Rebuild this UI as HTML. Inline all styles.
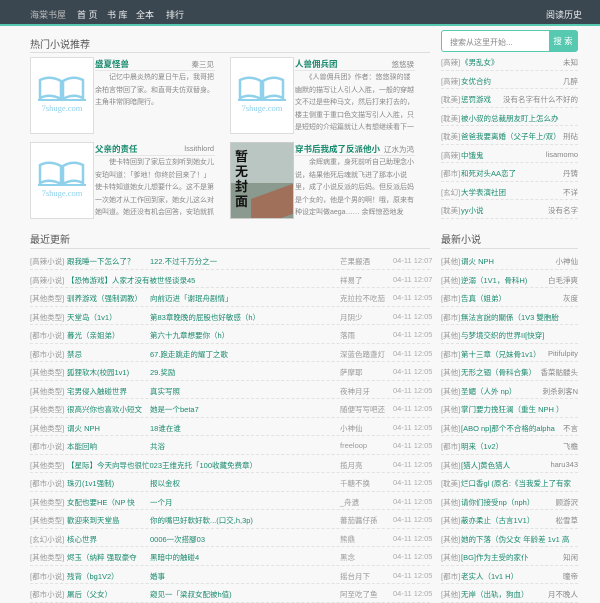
<!DOCTYPE html>
<html><head><meta charset="utf-8"><style>
*{margin:0;padding:0;box-sizing:border-box}
body{width:600px;height:600px;overflow:hidden;background:#f8f8f8;font-family:"Liberation Sans","Noto Sans CJK SC",sans-serif;color:#666;font-size:8px}
.nav{height:26px;background:#3a4750;border-bottom:2px solid #56c9b0;position:relative;color:#eee;font-size:9px}
.nav span{position:absolute;top:8px}
.abs{position:absolute}
.h{position:absolute;font-size:10px;color:#555}
.line{position:absolute;height:1px;background:#ddd}
.cover{position:absolute;width:64px;height:77px;background:#fff;border:1px solid #ddd}
.cover svg{position:absolute;left:6px;top:16px}
.cover i{position:absolute;left:0;width:62px;text-align:center;top:45px;font-style:normal;font-family:"Liberation Serif",serif;color:#8fd0ea;font-size:8.5px}
.bt{position:absolute;font-size:8.5px;font-weight:bold;color:#1a8a6e}
.au{position:absolute;font-size:7.5px;color:#888;text-align:right}
.ds{position:absolute;font-size:7px;line-height:12.5px;color:#888;overflow:hidden;height:63px}
.row{position:absolute;left:30px;width:400px;height:18.5px;border-bottom:1px dashed #e2e2e2;font-size:7.5px;white-space:nowrap}
.row span{position:absolute;top:5px}
.g{color:#999}.t{color:#1a8a6e}
.r{position:absolute;left:441px;width:137px;height:18.5px;border-bottom:1px dashed #e2e2e2;font-size:7.5px;white-space:nowrap;overflow:hidden}
.r span{position:absolute;top:5px}
.r .a{right:0;color:#888;background:#f8f8f8;padding-left:3px}
</style></head><body>
<div class="nav"><span style="left:30px;color:#bbb">海棠书屋</span><span style="left:77px">首 页</span><span style="left:107px">书 库</span><span style="left:136px">全本</span><span style="left:166px">排行</span><span style="left:546px">阅读历史</span></div>

<div class="h" style="left:30px;top:36px">热门小说推荐</div>
<div class="line" style="left:30px;top:52px;width:400px"></div>

<div style="position:absolute;left:441px;top:30px;width:137px;height:22px;border:1px solid #56c9b0;border-radius:3px;background:#fff"><span class="abs" style="left:8px;top:6px;font-size:8px;color:#888">搜索从这里开始...</span><div class="abs" style="right:0;top:0;width:28px;height:20px;background:#56c9b0;color:#fff;font-size:8.5px;text-align:center;line-height:20px">搜 索</div></div>

<div class="cover" style="left:30px;top:57px"><svg width="50" height="28" viewBox="0 0 50 28"><path d="M3 6 Q13 1 24 7 L24 25 Q13 19 3 24 Z M46 6 Q36 1 26 7 L26 25 Q36 19 46 24 Z" fill="none" stroke="#8fd0ea" stroke-width="2.5"/><path d="M1 26 H49" stroke="#8fd0ea" stroke-width="2"/></svg><i>7shuge.com</i></div>
<div class="bt" style="left:95px;top:58px">盛夏怪兽</div><div class="au" style="left:180px;top:59px;width:34px">秦三见</div>
<div class="line" style="left:95px;top:70px;width:120px;background:#e6e6e6"></div>
<div class="ds" style="left:95px;top:72px;width:120px">　　记忆中晨炎热的夏日午后，我哥把余柏言带回了家。和直哥夫仿双替身。主角非常阴暗爬行。</div>

<div class="cover" style="left:230px;top:57px"><svg width="50" height="28" viewBox="0 0 50 28"><path d="M3 6 Q13 1 24 7 L24 25 Q13 19 3 24 Z M46 6 Q36 1 26 7 L26 25 Q36 19 46 24 Z" fill="none" stroke="#8fd0ea" stroke-width="2.5"/><path d="M1 26 H49" stroke="#8fd0ea" stroke-width="2"/></svg><i>7shuge.com</i></div>
<div class="bt" style="left:295px;top:58px">人兽佣兵团</div><div class="au" style="left:380px;top:59px;width:34px">悠悠骙</div>
<div class="line" style="left:295px;top:70px;width:120px;background:#e6e6e6"></div>
<div class="ds" style="left:295px;top:72px;width:120px">　　《人兽佣兵团》作者：悠悠骙的镂幽默的描写让人引人入胜，一般的穿越文不过是些种马文，然后打来打去的，楼主侧重于重口色文描写引人入胜，只是短短的介绍篇就让人有想继续看下一篇的冲动，</div>

<div class="cover" style="left:30px;top:142px"><svg width="50" height="28" viewBox="0 0 50 28"><path d="M3 6 Q13 1 24 7 L24 25 Q13 19 3 24 Z M46 6 Q36 1 26 7 L26 25 Q36 19 46 24 Z" fill="none" stroke="#8fd0ea" stroke-width="2.5"/><path d="M1 26 H49" stroke="#8fd0ea" stroke-width="2"/></svg><i>7shuge.com</i></div>
<div class="bt" style="left:95px;top:143px">父亲的责任</div><div class="au" style="left:170px;top:144px;width:44px">lssithlord</div>
<div class="line" style="left:95px;top:155px;width:120px;background:#e6e6e6"></div>
<div class="ds" style="left:95px;top:157px;width:120px">　　使卡特回到了家后立刻听到她女儿安珀叫道：「爹地！你终於回来了！」使卡特知道她女儿想要什么。这不是第一次她才从工作回到家，她女儿这么对她叫道。她还没有机会回答，安珀就抓住他的手，</div>

<div class="abs" style="left:230px;top:142px;width:64px;height:77px;background:#8a9a8e;border:1px solid #ccc;overflow:hidden"><div class="abs" style="left:0;top:0;width:62px;height:40px;background:#b9c6c2"></div><div class="abs" style="left:20px;top:48px;width:44px;height:30px;background:#a0705a;transform:skewY(-20deg)"></div><div class="abs" style="left:4px;top:6px;width:16px;font-size:13px;line-height:15px;font-weight:bold;color:#111">暂无封面</div></div>
<div class="bt" style="left:295px;top:143px">穿书后我成了反派他小爸</div><div class="au" style="left:380px;top:144px;width:34px;background:#f8f8f8">辽水为鸿</div>
<div class="line" style="left:295px;top:155px;width:120px;background:#e6e6e6"></div>
<div class="ds" style="left:295px;top:157px;width:120px">　　余辉病重，身死前听自己助理念小说，结果他死后魂就飞进了那本小说里，成了小说反派的后妈。但反派后妈是个女的，他是个男的啊！哦，原来有种设定叫做aega…… 余辉惊恐地发现，oga会生孩</div>

<div class="h" style="left:30px;top:231px">最近更新</div>
<div class="line" style="left:30px;top:248px;width:400px"></div>

<div class="h" style="left:441px;top:231px">最新小说</div>
<div class="line" style="left:441px;top:248px;width:137px"></div>

<div id="L"></div>
<script>
var L=[["高辣小说","跟我睡一下怎么了？","122.不过千万分之一","芒果搬酒"],["高辣小说","【恐怖游戏】人家才没有被世怪谈录45","","祥易了"],["其他类型","驯养游戏（强制调教）","向前迈进「谢珉舟剧情」","克拉拉不吃茄"],["其他类型","天堂岛（1v1）","第83章晚晚的屁股也好敏感（h）","月阴少"],["都市小说","暮光（亲姐弟）","第六十九章想要你（h）","落雨"],["都市小说","禁忌","67.跑走跳走的耀丁之歌","深蓝色踏盏灯"],["其他类型","狐狸软木(校园1v1)","29.奖励","萨摩耶"],["其他类型","宅男侵入触碰世界","真实写照","夜神月牙"],["其他类型","很高兴你也喜欢小短文","她是一个beta7","随便写写吧还"],["其他类型","谓火 NPH","18谁在谁","小神仙"],["都市小说","本能回响","共浴","freeloop"],["其他类型","【星际】今天向导也很忙023王维克托「100收藏免费章）","","揽月亮"],["都市小说","珠刃(1v1强制)","报以金权","千糖不换"],["其他类型","女配也要HE（NP 快","一个月","_舟遗"],["其他类型","歡迎來到天堂島","你的嘴巴好軟好軟...(口交,h,3p)","蕃茄醬仔孫"],["玄幻小说","核心世界","0006一次搭腳03","熊鼎"],["其他类型","烬玉（纳粹 强取豪夺","黑暗中的触碰4","黑念"],["都市小说","残背（bg1V2）","婚事","摇台月下"],["都市小说","屠后（父女）","窥见一「梁叔女配被h值)","阿至吃了鱼"]];
var R=[["其他","谓火 NPH","小神仙"],["其他","逆溺（1V1，骨科H)","白毛淨爽"],["都市","告真（姐弟）","灰度"],["都市","無法言說的關係（1V3 雙胞胎",""],["其他","与梦境交织的世界II[快穿]",""],["都市","第十三章（兄妹骨1v1）","Pitifulpity"],["其他","无形之锢（骨科合集）","香菜骷髅头"],["其他","圣媚（人外 np）","刺杀刺客N"],["其他","掌门要力挽狂澜（重生 NPH ）",""],["其他","[ABO np]那个不合格的alpha","不言"],["都市","明来（1v2）","飞檐"],["其他","[猎人]黄色猎人","haru343"],["耽美","烂口香gl (原名:《当我爱上了有家",""],["其他","请你们接受np（nph）","顾游沢"],["其他","蔽亦柔止（古言1V1）","松雪草"],["其他","她的下落（伪父女 年龄差 1v1 高",""],["其他","[BG]作为主受的家仆","知闲"],["都市","老实人（1v1 H）","曈帝"],["其他","无岸（出轨，狗血）","月不晚人"]];
var H=[["高辣","《男乱女》","未知"],["高辣","女优合约","几醉"],["耽美","惩罚游戏","没有名字有什么不好的"],["耽美","被小叔的总裁朋友盯上怎么办",""],["耽美","爸爸我要离婚（父子年上/双）","刑砧"],["高辣","中饿鬼","lisamomo"],["都市","和死对头AA恋了","丹铸"],["玄幻","大学表演社团","不详"],["耽美","yy小说","没有名字"]];
var s="";
L.forEach(function(d,i){var y=251+i*18.5;s+='<div class="row" style="top:'+y+'px"><span class="g" style="left:0">['+d[0]+']</span><span class="t" style="left:37px">'+d[1]+'</span>'+(d[2]?'<span class="t" style="left:120px">'+d[2]+'</span>':'')+'<span class="g" style="left:310px;background:#f8f8f8;padding-right:20px">'+d[3]+'</span><span class="g" style="left:363px;color:#aaa">04-11 '+(i<2?'12:07':'12:05')+'</span></div>';});
R.forEach(function(d,i){var y=251+i*18.5;s+='<div class="r" style="top:'+y+'px"><span class="g" style="left:0">['+d[0]+']</span><span class="t" style="left:20px">'+d[1]+'</span>'+(d[2]?'<span class="a">'+d[2]+'</span>':'')+'</div>';});
H.forEach(function(d,i){var y=52+i*18.5;s+='<div class="r" style="top:'+y+'px"><span class="g" style="left:0">['+d[0]+']</span><span class="t" style="left:20px">'+d[1]+'</span>'+(d[2]?'<span class="a">'+d[2]+'</span>':'')+'</div>';});
document.getElementById("L").innerHTML=s;
</script>
</body></html>
